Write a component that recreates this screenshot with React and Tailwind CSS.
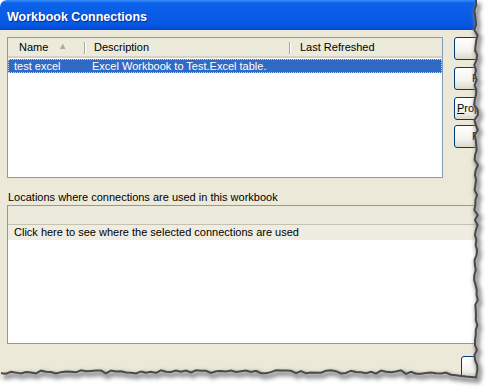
import React from "react";

// deterministic jitter for the torn paper edge
const rnd = (seed) => {
  let s = seed;
  return () => {
    s = (s * 9301 + 49297) % 233280;
    return s / 233280;
  };
};

const buildEdge = () => {
  const r = rnd(7);
  const right = [];
  for (let y = 0; y <= 372; y += 5) {
    right.push([476 + (r() - 0.5) * 4, y]);
  }
  const bottom = [];
  for (let x = 476; x >= 0; x -= 5) {
    const base = x > 400 ? 372 + (x - 400) * 0.05 : 372;
    bottom.push([x, base + (r() - 0.5) * 3.5]);
  }
  return { right, bottom };
};

const { right, bottom } = buildEdge();
const edgeLine = [...right, ...bottom].map((p) => p.join(",")).join(" ");
const outside =
  "M476,0 L486,0 L486,389 L0,389 " +
  [...bottom].reverse().map((p) => `L${p[0]},${p[1]}`).join(" ") +
  " " +
  [...right].reverse().map((p) => `L${p[0]},${p[1]}`).join(" ") +
  " Z";

const XpButton = ({ children, className = "" }) => (
  <div
    className={`w-[75px] h-[23px] shrink-0 rounded-[3px] border border-[#003c74] bg-[linear-gradient(180deg,#ffffff_0%,#f4f3ee_60%,#dcd8cb_100%)] flex items-center text-[11px] text-black whitespace-nowrap ${className}`}
  >
    {children}
  </div>
);

export default function App() {
  return (
    <div
      className="relative w-[486px] h-[389px] overflow-hidden bg-white"
      style={{ fontFamily: '"Liberation Sans", Arial, sans-serif' }}
    >
      <div className="w-[486px] h-[380px] flex flex-col">
        {/* Title bar */}
        <div className="h-[30px] rounded-tl-[7px] bg-[linear-gradient(180deg,#3d8ef9_0%,#0b62ea_10%,#0a5be6_50%,#0557e2_85%,#0346d3_100%)] flex items-center pl-[7px] pt-[4px]">
          <span className="text-white font-bold text-[12.5px] [text-shadow:1px_1px_0_#0a2d8c]">
            Workbook Connections
          </span>
        </div>

        <div className="flex flex-1">
          <div className="w-[3px] bg-[#0842d6]" />
          <div className="flex-1 bg-[#ece9d8] flex flex-col pl-[5px] pt-[7px]">
            {/* Top: connections list + buttons */}
            <div className="flex">
              <div className="ml-[2px] w-[436px] h-[141px] border border-[#7f9db9] bg-white flex flex-col">
                <div className="h-[20px] bg-[#ebeadb] border-b-2 border-[#d6d2c2] flex text-[11px] text-black">
                  <div className="w-[78px] flex items-center pl-[11px] relative">
                    <span>Name</span>
                    <span className="ml-[10px] text-[#aca899] text-[9px]">▲</span>
                    <span className="absolute right-0 top-[4px] h-[12px] w-[2px] border-l border-[#aca899] border-r border-r-white" />
                  </div>
                  <div className="w-[205px] flex items-center pl-[8px] relative">
                    <span>Description</span>
                    <span className="absolute right-0 top-[4px] h-[12px] w-[2px] border-l border-[#aca899] border-r border-r-white" />
                  </div>
                  <div className="flex-1 flex items-center pl-[9px]">
                    <span>Last Refreshed</span>
                  </div>
                </div>
                <div className="mt-[1px] h-[14px] bg-[#316ac5] text-white text-[11px] flex items-center border border-dotted border-[#c9d8f0]">
                  <span className="w-[78px] pl-[5px]">test excel</span>
                  <span className="pl-[5px]">Excel Workbook to Test.Excel table.</span>
                </div>
              </div>

              <div className="ml-[11px] flex flex-col">
                <XpButton className="pl-[19px]">Add...</XpButton>
                <XpButton className="mt-[7px] pl-[17px]">Remove</XpButton>
                <XpButton className="mt-[7px] pl-[2px]">
                  <span>
                    <span className="underline">P</span>roperties...
                  </span>
                </XpButton>
                <XpButton className="mt-[5px] pl-[17px]">Refresh</XpButton>
              </div>
            </div>

            {/* Locations */}
            <div className="mt-[12px] ml-[3px] text-[11px] text-black leading-[14px]">
              Locations where connections are used in this workbook
            </div>
            <div className="mt-[1px] ml-[2px] w-[480px] h-[139px] border border-[#7f9db9] bg-white flex flex-col">
              <div className="h-[19px] bg-[#ebeadb] border-b border-[#c5c2b2]" />
              <div className="h-[15px] bg-[#efede2] text-[11px] text-black flex items-center pl-[6px]">
                Click here to see where the selected connections are used
              </div>
            </div>

            <div className="mt-[12px] ml-[456px]">
              <XpButton className="pl-[24px]">Close</XpButton>
            </div>
          </div>
        </div>
      </div>

      {/* torn paper edge */}
      <svg className="absolute inset-0" width="486" height="389" viewBox="0 0 486 389">
        <defs>
          <filter id="blur2" x="-10%" y="-10%" width="120%" height="120%">
            <feGaussianBlur stdDeviation="2" />
          </filter>
          <filter id="blur1">
            <feGaussianBlur stdDeviation="0.7" />
          </filter>
        </defs>
        <path d={outside} fill="#ffffff" />
        <polyline
          points={edgeLine}
          fill="none"
          stroke="#8a8a8a"
          strokeWidth="5"
          filter="url(#blur2)"
          transform="translate(2,3)"
        />
        <polyline
          points={edgeLine}
          fill="none"
          stroke="#4a4a4a"
          strokeWidth="2"
          filter="url(#blur1)"
        />
      </svg>
    </div>
  );
}
